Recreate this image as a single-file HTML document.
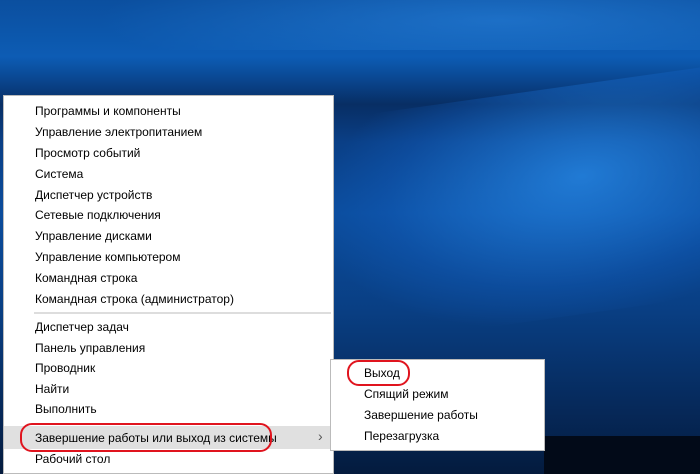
<!DOCTYPE html>
<html><head><meta charset="utf-8"><style>
*{margin:0;padding:0;box-sizing:border-box}
body{width:700px;height:474px;overflow:hidden;position:relative;font-family:"Liberation Sans","DejaVu Sans",sans-serif;
background:linear-gradient(180deg,#0b4f9f 0%,#0d5cb4 12%,#0a4a96 16%,#082e64 22%,#0a3f86 30%,#0b4c9c 45%,#093f84 65%,#062a5c 85%,#041b3e 100%);}
.beam{position:absolute;left:330px;top:90px;width:420px;height:230px;background:radial-gradient(ellipse at 60% 40%,rgba(40,140,235,.75),rgba(20,100,200,.3) 55%,rgba(0,0,0,0) 75%);transform:skewY(-8deg)}
.top{position:absolute;left:0;top:0;width:700px;height:50px;background:radial-gradient(ellipse 400px 60px at 500px 20px,rgba(40,130,220,.6),rgba(0,0,0,0))}
.bot{position:absolute;left:544px;top:436px;width:156px;height:38px;background:#020a18}
.menu{position:absolute;left:3px;top:95px;width:331px;height:379px;background:#fff;border:1px solid #bbb}
.it{position:absolute;left:31px;font-size:12px;color:#000;line-height:20px;white-space:nowrap}
.sep{position:absolute;left:30px;right:2px;top:216px;height:2px;background:#ddd}
.hl{position:absolute;left:0;right:0;top:330px;height:23px;background:#e0e0e0}
.sub{position:absolute;left:330px;top:359px;width:215px;height:92px;background:#fff;border:1px solid #bbb}
.sit{position:absolute;left:33px;font-size:12px;line-height:20px;white-space:nowrap}
.oval{position:absolute;border:2px solid #e0141e;border-radius:12px}
.arr{position:absolute;left:314px;top:332px;font-size:14px;color:#555}
</style></head><body>
<div class="top"></div>
<div class="beam"></div>
<div class="bot"></div>
<div class="menu">
<div class="it" style="top:5px">Программы и компоненты</div>
<div class="it" style="top:26px">Управление электропитанием</div>
<div class="it" style="top:47px">Просмотр событий</div>
<div class="it" style="top:68px">Система</div>
<div class="it" style="top:89px">Диспетчер устройств</div>
<div class="it" style="top:109px">Сетевые подключения</div>
<div class="it" style="top:130px">Управление дисками</div>
<div class="it" style="top:151px">Управление компьютером</div>
<div class="it" style="top:172px">Командная строка</div>
<div class="it" style="top:193px">Командная строка (администратор)</div>
<div class="sep"></div>
<div class="it" style="top:221px">Диспетчер задач</div>
<div class="it" style="top:242px">Панель управления</div>
<div class="it" style="top:262px">Проводник</div>
<div class="it" style="top:283px">Найти</div>
<div class="it" style="top:303px">Выполнить</div>
<div class="hl"></div>
<div class="it" style="top:332px">Завершение работы или выход из системы</div>
<div class="arr">›</div>
<div class="it" style="top:353px">Рабочий стол</div>
</div>
<div class="sub">
<div class="sit" style="top:3px">Выход</div>
<div class="sit" style="top:24px">Спящий режим</div>
<div class="sit" style="top:45px">Завершение работы</div>
<div class="sit" style="top:66px">Перезагрузка</div>
</div>
<div class="oval" style="left:20px;top:423px;width:252px;height:29px"></div>
<div class="oval" style="left:347px;top:360px;width:63px;height:26px"></div>
</body></html>
